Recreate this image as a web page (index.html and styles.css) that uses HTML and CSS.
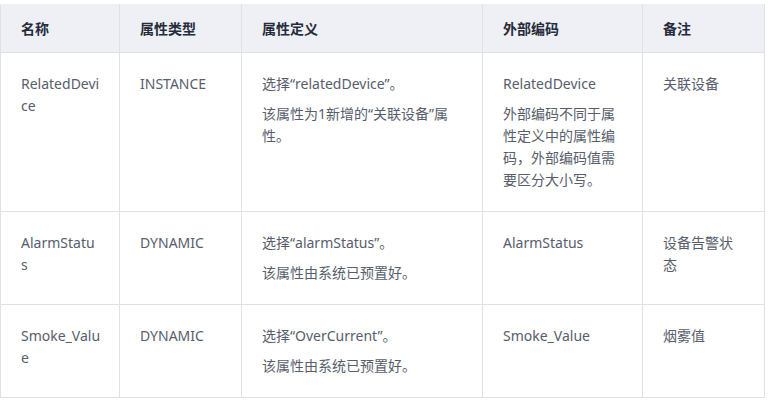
FILE: index.html
```html
<!DOCTYPE html>
<html lang="zh">
<head>
<meta charset="utf-8">
<title>属性表</title>
<link rel="stylesheet" href="styles.css">
</head>
<body>
<table class="attr-table">
  <colgroup>
    <col class="c1"><col class="c2"><col class="c3"><col class="c4"><col class="c5">
  </colgroup>
  <thead>
    <tr><th>名称</th><th>属性类型</th><th>属性定义</th><th>外部编码</th><th>备注</th></tr>
  </thead>
  <tbody>
    <tr>
      <td class="name"><p>RelatedDevice</p></td>
      <td><p>INSTANCE</p></td>
      <td><p>选择“relatedDevice”。</p><p>该属性为1新增的“关联设备”属性。</p></td>
      <td><p>RelatedDevice</p><p>外部编码不同于属性定义中的属性编码，外部编码值需要区分大小写。</p></td>
      <td><p>关联设备</p></td>
    </tr>
    <tr>
      <td class="name"><p>AlarmStatus</p></td>
      <td><p>DYNAMIC</p></td>
      <td><p>选择“alarmStatus”。</p><p>该属性由系统已预置好。</p></td>
      <td><p>AlarmStatus</p></td>
      <td><p>设备告警状态</p></td>
    </tr>
    <tr>
      <td class="name"><p>Smoke_Value</p></td>
      <td><p>DYNAMIC</p></td>
      <td><p>选择“OverCurrent”。</p><p>该属性由系统已预置好。</p></td>
      <td><p>Smoke_Value</p></td>
      <td><p>烟雾值</p></td>
    </tr>
  </tbody>
</table>
</body>
</html>
```
FILE: styles.css
```css
html, body {
  margin: 0;
  padding: 0;
  background: #ffffff;
}
body {
  padding-top: 4px;
  font-family: "Noto Sans", "Noto Sans CJK SC", sans-serif;
  font-size: 14px;
  color: #575d6c;
}
.attr-table {
  border-collapse: collapse;
  table-layout: fixed;
  width: 764px;
}
.c1 { width: 119px; }
.c2 { width: 122px; }
.c3 { width: 241px; }
.c4 { width: 160px; }
.c5 { width: 122px; }
.attr-table th,
.attr-table td {
  border: 1px solid #dfe1e6;
  padding: 12px 20px;
  text-align: left;
  vertical-align: top;
  word-break: break-all;
  line-height: 22px;
}
.attr-table td.name {
  padding-right: 18.5px;
}
.attr-table th {
  background: #eef0f5;
  color: #252b3a;
  font-weight: 700;
  padding: 13px 20px 12px;
  border-top-color: #eef0f5;
}
.attr-table td p {
  margin: 8px 0;
}
```
